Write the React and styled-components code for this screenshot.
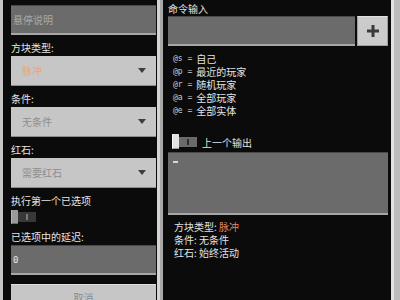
import React from "react";
import styled, { createGlobalStyle } from "styled-components";

const GlobalStyle = createGlobalStyle`
  html, body {
    margin: 0;
    height: 300px;
    overflow: hidden;
    background: #c6c6c6;
    font-family: "Noto Sans CJK SC", "Noto Sans", sans-serif;
  }
`;

const Screen = styled.div`
  display: flex;
  height: 300px;
  padding-left: 3px;
  box-sizing: border-box;
  background: #c6c6c6;
`;

const Panel = styled.div`
  background: #0b0b0b;
  box-sizing: border-box;
  overflow: hidden;
  width: ${(p) => p.width}px;
  flex-shrink: 0;
  padding: ${(p) => p.pad};
  display: flex;
  flex-direction: column;
  & > * {
    flex-shrink: 0;
  }
`;

const Divider = styled.div`
  width: 6px;
  flex-shrink: 0;
  background: linear-gradient(90deg, #d4d4d4 0 3px, #a9a9a9 3px);
`;

const Edge = styled.div`
  flex: 1;
  background: linear-gradient(90deg, #e2e2e2 0 3px, #bdbdbd 3px);
`;

const Label = styled.div`
  font-size: 10px;
  line-height: 12px;
  color: #e4e4e4;
  padding: ${(p) => p.pad || "7px 0 2px"};
  white-space: nowrap;
`;

const TextField = styled.div`
  height: ${(p) => p.h || 30}px;
  flex: ${(p) => (p.grow ? 1 : "none")};
  box-sizing: border-box;
  background: #6b6b6b;
  border-top: 1px solid #4a4a4a;
  border-bottom: 2px solid #a6a6a6;
  display: flex;
  align-items: ${(p) => (p.top ? "flex-start" : "center")};
  padding-left: 2px;
  font-size: 10px;
  color: #a9a9a9;
`;

const Digit = styled.span`
  font-family: "DejaVu Sans Mono", monospace;
  font-size: 9px;
  color: #e8e8e8;
`;

const Cursor = styled.span`
  display: block;
  width: 5px;
  height: 2px;
  background: #d8d8d8;
  margin: 8px 0 0 3px;
`;

const Dropdown = styled.div`
  height: 30px;
  box-sizing: border-box;
  background: #c6c6c6;
  border-bottom: 1px solid #8c8c8c;
  display: flex;
  align-items: center;
  justify-content: space-between;
  padding: 0 10px 0 11px;
  font-size: 10px;
  color: ${(p) => p.color || "#8e8e8e"};
`;

const Arrow = styled.span`
  width: 0;
  height: 0;
  border-left: 4.5px solid transparent;
  border-right: 4.5px solid transparent;
  border-top: 5px solid #3e3e3e;
`;

const ToggleWrap = styled.div`
  display: flex;
  align-items: center;
  height: 15px;
`;

const Track = styled.div`
  width: 18px;
  height: 10px;
  background: ${(p) => (p.on ? "#6a6a6a" : "#383838")};
  display: flex;
  align-items: center;
  justify-content: center;
  order: ${(p) => (p.on ? 0 : 1)};
  &::after {
    content: "";
    width: 2px;
    height: 6px;
    background: ${(p) => (p.on ? "#2c2c2c" : "#7a7a7a")};
  }
`;

const Knob = styled.div`
  width: 7px;
  height: ${(p) => (p.on ? 15 : 14)}px;
  box-sizing: border-box;
  background: ${(p) => (p.on ? "#e2e2e2" : "#9a9a9a")};
  border-left: 1px solid ${(p) => (p.on ? "#f6f6f6" : "#b4b4b4")};
  border-bottom: 1px solid ${(p) => (p.on ? "#9a9a9a" : "#6c6c6c")};
`;

const Button = styled.div`
  height: 30px;
  margin-top: 9px;
  background: #c6c6c6;
  border-top: 1px solid #dedede;
  display: flex;
  justify-content: center;
  font-size: 10px;
  line-height: 12px;
  color: #8a8a8a;
  padding-top: 7px;
  box-sizing: border-box;
`;

const CommandRow = styled.div`
  display: flex;
  gap: 2px;
`;

const PlusButton = styled.div`
  width: 31px;
  height: 30px;
  box-sizing: border-box;
  background: #cbcbcb;
  border: 1px solid #9d9d9d;
  border-top-color: #e0e0e0;
  display: flex;
  align-items: center;
  justify-content: center;
`;

const HintList = styled.div`
  padding: 6px 0 0 5px;
`;

const HintRow = styled.div`
  display: flex;
  align-items: center;
  height: 13px;
  font-size: 10px;
  color: #e4e4e4;
`;

const Code = styled.span`
  font-family: "DejaVu Sans Mono", monospace;
  font-size: 8px;
  color: #cfcfcf;
  margin-right: 4px;
`;

const OutputRow = styled(ToggleWrap)`
  margin: 17px 0 0 4px;
  gap: 5px;
`;

const OutputBox = styled(TextField)`
  margin-top: 3px;
`;

const Status = styled.div`
  padding: 5px 0 0 6px;
`;

const StatusLine = styled.div`
  display: flex;
  align-items: center;
  height: 13px;
  font-size: 10px;
  color: #e2e2e2;
  white-space: pre;
`;

const Accent = styled.span`
  color: #dd8a6a;
`;

function Toggle({ on }) {
  return (
    <ToggleWrap>
      <Knob on={on} />
      <Track on={on} />
    </ToggleWrap>
  );
}

const hints = [
  ["@s", "自己"],
  ["@p", "最近的玩家"],
  ["@r", "随机玩家"],
  ["@a", "全部玩家"],
  ["@e", "全部实体"],
];

export default function App() {
  return (
    <>
      <GlobalStyle />
      <Screen>
        <Panel width={154} pad="5px 1px 0 8px">
          <TextField>悬停说明</TextField>

          <Label>方块类型:</Label>
          <Dropdown color="#e6a87e">
            脉冲
            <Arrow />
          </Dropdown>

          <Label>条件:</Label>
          <Dropdown>
            无条件
            <Arrow />
          </Dropdown>

          <Label>红石:</Label>
          <Dropdown>
            需要红石
            <Arrow />
          </Dropdown>

          <Label>执行第一个已选项</Label>
          <Toggle />

          <Label>已选项中的延迟:</Label>
          <TextField>
            <Digit>0</Digit>
          </TextField>

          <Button>取消</Button>
        </Panel>

        <Divider />

        <Panel width={228} pad="0 3px 0 5px">
          <Label pad="3px 0 1px">命令输入</Label>
          <CommandRow>
            <TextField grow />
            <PlusButton>
              <svg width="12" height="12" viewBox="0 0 12 12">
                <path d="M4.5 0h3v4.5H12v3H7.5V12h-3V7.5H0v-3h4.5z" fill="#3a3a3a" />
              </svg>
            </PlusButton>
          </CommandRow>

          <HintList>
            {hints.map(([code, text]) => (
              <HintRow key={code}>
                <Code>{code} =</Code>
                {text}
              </HintRow>
            ))}
          </HintList>

          <OutputRow>
            <Toggle on />
            <Label pad="2px 0 0">上一个输出</Label>
          </OutputRow>

          <OutputBox h={63} top>
            <Cursor />
          </OutputBox>

          <Status>
            <StatusLine>
              方块类型: <Accent>脉冲</Accent>
            </StatusLine>
            <StatusLine>条件: 无条件</StatusLine>
            <StatusLine>红石: 始终活动</StatusLine>
          </Status>
        </Panel>

        <Edge />
      </Screen>
    </>
  );
}
